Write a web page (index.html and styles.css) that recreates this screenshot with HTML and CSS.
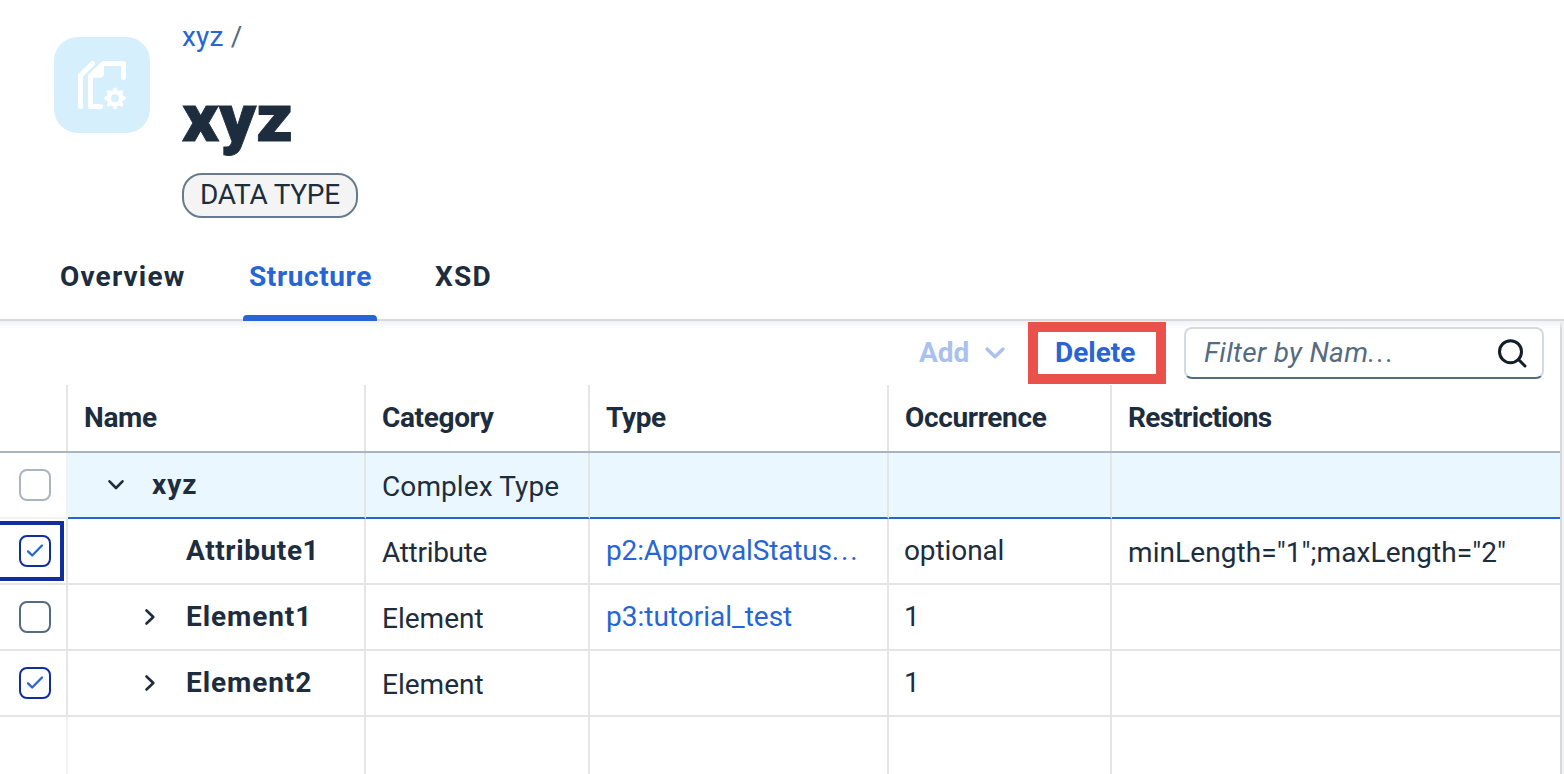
FILE: index.html
```html
<!DOCTYPE html>
<html lang="en">
<head>
<meta charset="utf-8">
<title>xyz - Data Type</title>
<link rel="stylesheet" href="styles.css">
</head>
<body>
<header class="object-header">
  <svg class="avatar" viewBox="0 0 96 96" fill="none" stroke="#fff" stroke-width="5" stroke-linecap="round" stroke-linejoin="round">
    <path d="M38.5 26.5 26.5 38.5V69.5"/>
    <path d="M46.5 69.5H36.5V39L49.5 26.5H69.5V40.5"/>
    <path d="M36 39.5 50 26V36Q50 40.7 45.3 40.7H36Z" fill="#fff" stroke="none"/>
    <circle cx="61" cy="61.3" r="6.2" stroke-width="4.4"/>
    <path d="M61 53v-.5M61 70v.5M52.6 61.3h-.5M69.4 61.3h.5M55 55.3l-.3-.3M67 67.3l.3.3M67 55.3l.3-.3M55 67.3l-.3.3" stroke-width="4"/>
  </svg>
  <div class="heading">
    <nav class="breadcrumb"><a>xyz</a><span class="slash">/</span></nav>
    <h1 class="title">xyz</h1>
    <span class="badge">DATA TYPE</span>
  </div>
</header>
<nav class="tabs">
  <a class="tab t-overview">Overview</a>
  <a class="tab active">Structure</a>
  <a class="tab t-xsd">XSD</a>
</nav>
<main class="panel">
  <div class="toolbar">
    <div class="add"><span>Add</span>
      <svg width="22" height="14" viewBox="0 0 22 14" fill="none" stroke="#a9c1ee" stroke-width="3.4" stroke-linecap="round" stroke-linejoin="round"><path d="M3 3 11 10.8 19 3"/></svg>
    </div>
    <div class="delete">Delete</div>
    <div class="search"><span class="t-filter">Filter by Nam<span class="dots">...</span></span>
      <svg width="30" height="30" viewBox="0 0 30 30" fill="none" stroke="#131e29" stroke-width="3" stroke-linecap="round"><circle cx="13.5" cy="13.7" r="11"/><path d="M21.5 21.5 28 28"/></svg>
    </div>
  </div>
  <div class="table">
    <div class="row head">
      <div class="cell"></div>
      <div class="cell"><span>Name</span></div>
      <div class="cell"><span>Category</span></div>
      <div class="cell"><span>Type</span></div>
      <div class="cell"><span>Occurrence</span></div>
      <div class="cell"><span class="t-restrictions">Restrictions</span></div>
    </div>
    <div class="row root">
      <div class="cell select"><i class="box disabled"></i></div>
      <div class="cell name level0">
        <svg class="arrow" width="18" height="18" viewBox="0 0 18 18" fill="none" stroke="#1d2d3e" stroke-width="2.6" stroke-linecap="round" stroke-linejoin="round"><path d="M2.5 5.3 9 12 15.500 5.300"/></svg>
        <span class="t-root">xyz</span>
      </div>
      <div class="cell low"><span class="t-complex">Complex Type</span></div>
      <div class="cell"></div><div class="cell"></div><div class="cell"></div>
    </div>
    <div class="row">
      <div class="cell select focused"><i class="box checked"><svg viewBox="0 0 28 28" fill="none" stroke="#2764d6" stroke-width="2.3" stroke-linecap="round" stroke-linejoin="round"><path d="M7 14.400 11.200 18.500 21 8.500"/></svg></i></div>
      <div class="cell name level1"><span class="arrow"></span><span>Attribute1</span></div>
      <div class="cell low"><span class="t-attr">Attribute</span></div>
      <div class="cell link"><span class="t-approval">p2:ApprovalStatus<span class="dots">...</span></span></div>
      <div class="cell occurs"><span class="t-optional">optional</span></div>
      <div class="cell low"><span class="t-length">minLength="1";maxLength="2"</span></div>
    </div>
    <div class="row">
      <div class="cell select"><i class="box"></i></div>
      <div class="cell name level1">
        <svg class="arrow" width="18" height="18" viewBox="0 0 18 18" fill="none" stroke="#1d2d3e" stroke-width="2.6" stroke-linecap="round" stroke-linejoin="round"><path d="M5.500 2.500 12.300 9 5.500 15.500"/></svg>
        <span class="t-el">Element1</span>
      </div>
      <div class="cell low"><span>Element</span></div>
      <div class="cell link"><span>p3:tutorial_test</span></div>
      <div class="cell occurs"><span>1</span></div>
      <div class="cell"></div>
    </div>
    <div class="row">
      <div class="cell select"><i class="box checked"><svg viewBox="0 0 28 28" fill="none" stroke="#2764d6" stroke-width="2.3" stroke-linecap="round" stroke-linejoin="round"><path d="M7 14.400 11.200 18.500 21 8.500"/></svg></i></div>
      <div class="cell name level1">
        <svg class="arrow" width="18" height="18" viewBox="0 0 18 18" fill="none" stroke="#1d2d3e" stroke-width="2.6" stroke-linecap="round" stroke-linejoin="round"><path d="M5.500 2.500 12.300 9 5.500 15.500"/></svg>
        <span class="t-el">Element2</span>
      </div>
      <div class="cell low"><span>Element</span></div>
      <div class="cell"></div>
      <div class="cell occurs"><span>1</span></div>
      <div class="cell"></div>
    </div>
    <div class="row empty">
      <div class="cell select"></div><div class="cell"></div><div class="cell"></div><div class="cell"></div><div class="cell"></div><div class="cell"></div>
    </div>
  </div>
</main>
</body>
</html>
```
FILE: styles.css
```css
*, *::after { box-sizing: border-box; }
body {
  margin: 0;
  width: 1564px;
  height: 774px;
  overflow: hidden;
  background: #fff;
  color: #1d2d3e;
  font: 400 28px/32px Roboto, "Liberation Sans", sans-serif;
  white-space: nowrap;
  display: flex;
  flex-direction: column;
}
.object-header { height: 232px; flex: none; display: flex; gap: 32px; padding-left: 54px; }
.avatar { width: 96px; height: 96px; margin-top: 37px; border-radius: 24px; background: #d6effd; }
.heading { padding-top: 21px; }
.breadcrumb { display: flex; gap: 7px; color: #2764d6; letter-spacing: .2px; }
.slash { color: #556b82; }
.title {
  width: max-content; margin: 27px 0 0; font-size: 67px; line-height: 76px; font-weight: 900;
  transform: scaleX(1.07); transform-origin: left; -webkit-text-stroke: .8px #1d2d3e;
}
.badge {
  display: flex; align-items: center; width: 176px; height: 45px; margin-top: 17px; padding: 0 0 2px 16px;
  border: 2px solid #667b90; border-radius: 20px; background: #f4f4f4; line-height: 38px; letter-spacing: -.25px;
}
.tabs {
  height: 89px; flex: none; display: flex; gap: 52px; padding-left: 54px;
  border-bottom: 2px solid #d9d9d9; font-weight: 700; line-height: 89px;
}
.tab { padding: 0 6px; height: 89px; }
.t-overview { width: 137px; letter-spacing: 1.15px; }
.t-xsd { letter-spacing: 1.2px; }
.tab.active { color: #2764d6; width: 134px; position: relative; letter-spacing: .6px; }
.tab.active::after {
  content: ""; position: absolute; left: 0; right: 0; bottom: 0; height: 6px;
  background: #2764d6; border-radius: 4px 4px 0 0;
}
.panel {
  flex: 1;
  background:
    linear-gradient(#eff2f4, rgba(255, 255, 255, 0)) 0 0 / 100% 8px no-repeat,
    linear-gradient(90deg, transparent 1560px, #d9d9d9 1560px, #d9d9d9 1562px, #f3f4f5 1562px);
}
.toolbar { height: 64px; display: flex; justify-content: flex-end; align-items: flex-start; padding-right: 20px; font-weight: 700; }
.add { display: flex; align-items: center; justify-content: space-between; width: 87px; height: 62px; margin: 1px 22px 0 0; color: #a9c1ee; }
.delete { width: 138px; height: 62px; margin: 1px 18px 0 0; padding-left: 17px; border: 10px solid #e9514a; line-height: 41px; color: #2764d6; background: #fff; }
.search {
  display: flex; justify-content: space-between; width: 360px; height: 52px; margin-top: 6px; padding: 8px 15px 0 18px;
  border: 2px solid #d5dade; border-bottom-color: #556b82; border-radius: 8px; background: #fff;
  font-weight: 400; font-style: italic; color: #556b82;
}
.search svg { margin-top: 1px; }
.t-filter { letter-spacing: .3px; }
.dots { letter-spacing: 1.8px; }
.row { display: grid; grid-template-columns: 68px 298px 224px 299px 223px 448px; height: 66px; }
.cell { border-right: 2px solid #e5e5e5; border-bottom: 2px solid #e5e5e5; padding-left: 16px; display: flex; align-items: center; }
.cell:last-child { border-right: 0; }
.head { height: 68px; font-weight: 700; letter-spacing: -.35px; background: linear-gradient(#a9b4be, #a9b4be) 0 66px / 1560px 2px no-repeat; }
.head .cell { height: 66px; border-bottom: 0; }
.t-restrictions { letter-spacing: -.7px; }
.root .cell { background: #ebf7fe; border-bottom-color: #2764d6; }
.root .cell.select { background: #fff; border-color: #f2f2f2; }
.empty { height: 57px; }
.empty .cell { border-bottom: 0; }
.empty .select { border-color: #f2f2f2; }
.select { padding-left: 19px; position: relative; }
.box { display: block; width: 32px; height: 32px; border: 2px solid #556b82; border-radius: 8px; }
.box svg { display: block; width: 28px; height: 28px; }
.box.disabled { border-color: #aab5c0; }
.box.checked { border-color: #0f2f9f; }
.focused::after { content: ""; position: absolute; left: 0; top: 2px; width: 64px; height: 60px; border: 4px solid #0f2f9f; border-left: 0; }
.name { font-weight: 700; letter-spacing: .6px; }
.t-root { letter-spacing: 1px; }
.t-el { letter-spacing: .9px; }
.arrow { width: 18px; height: 18px; margin-right: 27px; flex: none; }
.level0 { padding-left: 39px; }
.level1 { padding-left: 73px; }
.low { padding-top: 3px; }
.occurs { padding-left: 15px; }
.link { color: #2764d6; }
.t-complex { letter-spacing: .1px; }
.t-attr { letter-spacing: -.3px; }
.t-approval { letter-spacing: -.15px; }
.t-optional { letter-spacing: -.1px; }
.t-length { letter-spacing: .08px; }
```
